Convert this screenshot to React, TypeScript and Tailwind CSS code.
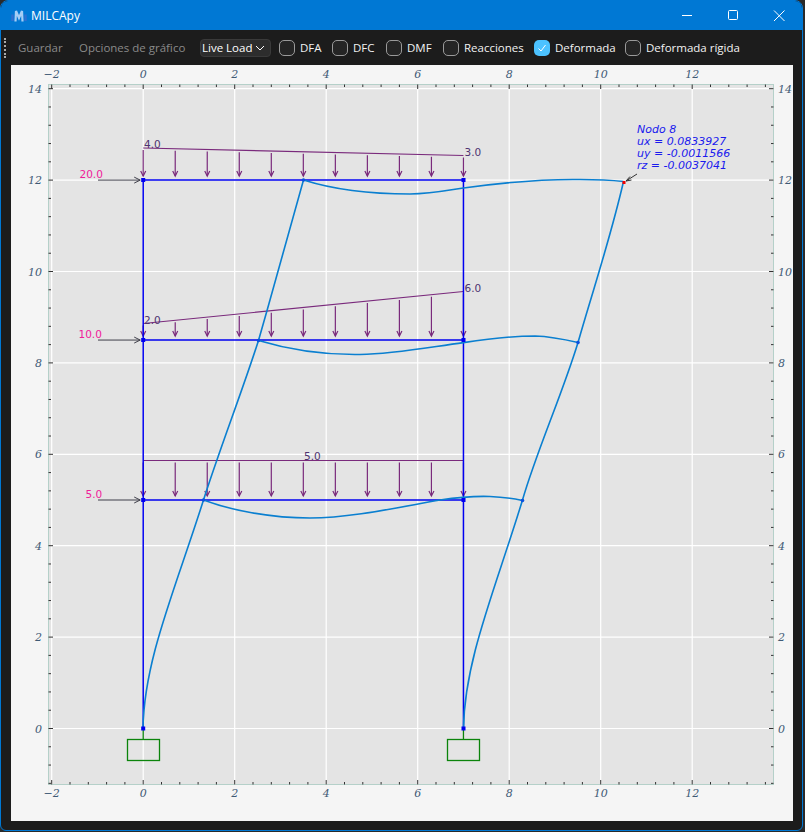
const X = (v: number) => 143.2 + v * 45.75;
const Y = (v: number) => 728.5 - v * 45.7;

const xMajor = [-2, 0, 2, 4, 6, 8, 10, 12];
const yMajor = [0, 2, 4, 6, 8, 10, 12, 14];
const xMinor = [-1.6, -1.2, -0.8, -0.4, 0.4, 0.8, 1.2, 1.6, 2.4, 2.8, 3.2, 3.6, 4.4, 4.8, 5.2, 5.6, 6.4, 6.8, 7.2, 7.6, 8.4, 8.8, 9.2, 9.6, 10.4, 10.8, 11.2, 11.6, 12.4, 12.8, 13.2, 13.6];
const yMinor = [-1.2, -0.8, -0.4, 0.4, 0.8, 1.2, 1.6, 2.4, 2.8, 3.2, 3.6, 4.4, 4.8, 5.2, 5.6, 6.4, 6.8, 7.2, 7.6, 8.4, 8.8, 9.2, 9.6, 10.4, 10.8, 11.2, 11.6, 12.4, 12.8, 13.2, 13.6];

const label = (v: number) => (v < 0 ? `\u2212${-v}` : `${v}`);

// plot box, in picture coordinates
const box = { l: 48.5, t: 84.5, r: 773.5, b: 784.5 };

const arrowXs = [0, 0.7, 1.4, 2.1, 2.8, 3.5, 4.2, 4.9, 5.6, 6.3, 7];

function Loads({ y, top }: { y: number; top: (x: number) => number }) {
  return (
    <g stroke="#7a2a7c" strokeWidth="1.2" fill="none">
      {arrowXs.map((v) => (
        <g key={v}>
          <line x1={X(v)} y1={top(v) + 2} x2={X(v)} y2={Y(y) - 4} />
          <path d={`M${X(v) - 2.5} ${Y(y) - 9}L${X(v)} ${Y(y) - 4}L${X(v) + 2.5} ${Y(y) - 9}`} />
        </g>
      ))}
    </g>
  );
}

function Plot() {
  const storeys = [5, 8.5, 12];
  const fontAxis = { fontFamily: '"DejaVu Serif", serif', fontStyle: 'italic', fontSize: 11, fill: '#3f5a75' };
  const fontSans = { fontFamily: '"DejaVu Sans", sans-serif', fontSize: 10.5 };
  return (
    <svg width="782" height="756" viewBox="11 65 782 756" className="block">
      <rect x={box.l} y={box.t} width={box.r - box.l} height={box.b - box.t} fill="#e4e4e4" stroke="#b5d0c9" />
      {/* grid */}
      <g stroke="#ffffff" strokeWidth="1.2">
        {xMajor.map((v) => (
          <line key={v} x1={X(v)} y1={box.t + 4} x2={X(v)} y2={box.b} />
        ))}
        {yMajor.map((v) => (
          <line key={v} x1={box.l + 4} y1={Y(v)} x2={box.r} y2={Y(v)} />
        ))}
      </g>
      {/* ticks */}
      <g stroke="#333" strokeWidth="1">
        {xMajor.map((v) => (
          <g key={v}>
            <line x1={X(v)} y1={box.t} x2={X(v)} y2={box.t + 4.5} />
            <line x1={X(v)} y1={box.b} x2={X(v)} y2={box.b - 4.5} />
          </g>
        ))}
        {xMinor.map((v) => (
          <g key={v}>
            <line x1={X(v)} y1={box.t} x2={X(v)} y2={box.t + 2.5} />
            <line x1={X(v)} y1={box.b} x2={X(v)} y2={box.b - 2.5} />
          </g>
        ))}
        {yMajor.map((v) => (
          <g key={v}>
            <line x1={box.l} y1={Y(v)} x2={box.l + 4.5} y2={Y(v)} />
            <line x1={box.r} y1={Y(v)} x2={box.r - 4.5} y2={Y(v)} />
          </g>
        ))}
        {yMinor.map((v) => (
          <g key={v}>
            <line x1={box.l} y1={Y(v)} x2={box.l + 2.5} y2={Y(v)} />
            <line x1={box.r} y1={Y(v)} x2={box.r - 2.5} y2={Y(v)} />
          </g>
        ))}
      </g>
      {/* tick labels */}
      {xMajor.map((v) => (
        <g key={v}>
          <text x={X(v)} y={78} textAnchor="middle" {...fontAxis}>{label(v)}</text>
          <text x={X(v)} y={797} textAnchor="middle" {...fontAxis}>{label(v)}</text>
        </g>
      ))}
      {yMajor.map((v) => (
        <g key={v}>
          <text x={42} y={Y(v) + 4} textAnchor="end" {...fontAxis}>{v}</text>
          <text x={778} y={Y(v) + 4} {...fontAxis}>{v}</text>
        </g>
      ))}
      {/* supports */}
      <g stroke="#0b840b" strokeWidth="1.3" fill="none">
        <line x1={X(0)} y1={Y(0)} x2={X(0)} y2={739.5} />
        <rect x={127.5} y={739.5} width={32} height={21} />
        <line x1={X(7)} y1={Y(0)} x2={X(7)} y2={739.5} />
        <rect x={447.5} y={739.5} width={32} height={21} />
      </g>
      {/* distributed loads */}
      <g stroke="#7a2a7c" strokeWidth="1.2" fill="none">
        <line x1={X(0)} y1={148} x2={X(7)} y2={155.5} />
        <line x1={X(0)} y1={323.5} x2={X(7)} y2={291.5} />
        <line x1={X(0)} y1={460.5} x2={X(7)} y2={460.5} />
      </g>
      <Loads y={12} top={(v) => 148 + (v / 7) * 7.5} />
      <Loads y={8.5} top={(v) => 323.5 - (v / 7) * 32} />
      <Loads y={5} top={() => 460.5} />
      <g {...fontSans} fill="#4f3370">
        <text x={144} y={148}>4.0</text>
        <text x={464.5} y={156}>3.0</text>
        <text x={144} y={324}>2.0</text>
        <text x={464.5} y={292}>6.0</text>
        <text x={304} y={460}>5.0</text>
      </g>
      {/* point loads */}
      {[
        { s: 12, t: '20.0', x: 79.5, y: 178, a: 98 },
        { s: 8.5, t: '10.0', x: 78.5, y: 338, a: 98 },
        { s: 5, t: '5.0', x: 85.5, y: 498, a: 98 },
      ].map((p) => (
        <g key={p.t}>
          <line x1={p.a} y1={Y(p.s)} x2={X(0) - 3} y2={Y(p.s)} stroke="#3f3f4a" strokeWidth="1" />
          <path d={`M${X(0) - 9} ${Y(p.s) - 3}L${X(0) - 3} ${Y(p.s)}L${X(0) - 9} ${Y(p.s) + 3}`} stroke="#3f3f4a" fill="none" />
          <text x={p.x} y={p.y} {...fontSans} fill="#f0209a">{p.t}</text>
        </g>
      ))}
      {/* frame */}
      <g stroke="#0000f0" strokeWidth="1.5" fill="none">
        <line x1={X(0)} y1={Y(0)} x2={X(0)} y2={Y(12)} />
        <line x1={X(7)} y1={Y(0)} x2={X(7)} y2={Y(12)} />
        {storeys.map((s) => (
          <line key={s} x1={X(0)} y1={Y(s)} x2={X(7)} y2={Y(s)} />
        ))}
      </g>
      {/* deformed shape */}
      <g stroke="#0a7fd0" strokeWidth="1.6" fill="none">
        <path d="M143 728.5C144 660 175 590 203.5 500C220 448 242 392 258.5 340.5C274 286 290 230 303.5 180" />
        <path d="M463.5 728.5C464.5 660 495 590 522.5 500C537 450 562 395 578 342.5C593 290 610 240 623.5 181.5" />
        <path d="M303.5 180C335 190 375 194 410 194C430 194 450 190 463.5 188C500 183 545 179 580 179.5C595 179.5 610 180 623.5 181.5" />
        <path d="M258.5 340.5C290 350 325 355 360 354.5C395 354 430 347 463.5 342.6C490 338.5 515 336 535 336C550 336.5 565 339.5 578 342.5" />
        <path d="M203.5 500C230 510 270 518 310 518C350 518 395 508 440 500C460 497 475 496 490 496.5C503 497 513 498.5 522.5 500.5" />
      </g>
      {/* nodes */}
      <g fill="#0000f0">
        {[[143.2, 728.5], [463.5, 728.5], [143.2, 500], [463.5, 500], [143.2, 340], [463.5, 340], [143.2, 180], [463.5, 180]].map(([x, y]) => (
          <rect key={`${x}-${y}`} x={x - 2} y={y - 2} width="4" height="4" />
        ))}
      </g>
      <g fill="#0a50e0">
        {[[203.5, 500], [258.5, 340.5], [303.5, 180], [522.5, 500.5], [578, 342.5]].map(([x, y]) => (
          <circle key={`${x}-${y}`} cx={x} cy={y} r="1.8" />
        ))}
      </g>
      <rect x={622.5} y={181} width="3" height="3" fill="#f00000" />
      {/* annotation */}
      <path d="M637 174L626 181M630 176.5L626 181L631.5 180" stroke="#333" fill="none" />
      <g fontFamily='"DejaVu Sans", sans-serif' fontStyle="italic" fontSize="11" fill="#1a1aee">
        <text x={637} y={132.5}>Nodo 8</text>
        <text x={637} y={144.5}>ux = 0.0833927</text>
        <text x={637} y={156.5}>uy = -0.0011566</text>
        <text x={637} y={168.5}>rz = -0.0037041</text>
      </g>
    </svg>
  );
}

function Check({ text, checked, className }: { text: string; checked?: boolean; className?: string }) {
  return (
    <div className={`flex items-center gap-[5px] ${className ?? ''}`}>
      {checked ? (
        <span className="flex size-4 shrink-0 items-center justify-center rounded-[5px] bg-[#4cc2ff]">
          <svg width="10" height="10" viewBox="0 0 10 10" fill="none" stroke="#fff" strokeWidth="1">
            <path d="M1.5 5.5L4 8L8.5 2" />
          </svg>
        </span>
      ) : (
        <span className="size-4 shrink-0 rounded-[5px] border border-[#9a9a9a] bg-[#252525]" />
      )}
      <span>{text}</span>
    </div>
  );
}

export default function App() {
  return (
    <div className="h-[832px] w-[805px] overflow-hidden bg-[#2a2a2a] font-['Open_Sans',sans-serif] text-[11.5px]">
      <div className="mr-[2px] flex h-[831px] flex-col overflow-hidden rounded-t-lg rounded-b-md border border-[#0078d4] bg-[#1c1c1c]">
        <div className="flex h-[29px] shrink-0 items-center bg-[#0078d4] text-white">
          <svg width="20" height="20" viewBox="0 0 20 20" className="ml-[8px]" fill="none">
            <path d="M3.5 8.5V15M16.5 8.5V15" stroke="#2f6fd0" strokeWidth="2.4" />
            <path d="M6.5 15.5L7 5L10 12L13 5L13.5 15.5" stroke="#a6cdf5" strokeWidth="2.2" />
          </svg>
          <span className="ml-[2px] text-xs">MILCApy</span>
          <div className="ml-auto flex items-center">
            <svg width="46" height="29" viewBox="0 0 46 29" stroke="#fff" fill="none"><path d="M18 14.5H28" /></svg>
            <svg width="46" height="29" viewBox="0 0 46 29" stroke="#fff" fill="none"><rect x="18.5" y="9.5" width="9" height="9" rx="1" /></svg>
            <svg width="46" height="29" viewBox="0 0 46 29" stroke="#fff" fill="none"><path d="M18 9.5L28.5 20M28.5 9.5L18 20" /></svg>
          </div>
        </div>
        <div className="flex h-[35px] shrink-0 items-center text-[#f2f2f2]">
          <div className="ml-[3px] h-[20px] w-[3px] border-l-2 border-dotted border-[#aaa]" />
          <span className="ml-[11px] w-[61px] text-[#8a8a8a]">Guardar</span>
          <span className="w-[121px] text-[#8a8a8a]">Opciones de gráfico</span>
          <div className="flex h-[18px] w-[71px] items-center gap-[3px] rounded-[4px] border border-[#3a3a3a] bg-[#2d2d2d] px-[1px] text-white">
            Live Load
            <svg width="10" height="6" viewBox="0 0 10 6" fill="none" stroke="#fff"><path d="M1 1L5 5L9 1" /></svg>
          </div>
          <div className="ml-[8px] flex items-center">
            <Check text="DFA" className="w-[53px]" />
            <Check text="DFC" className="w-[54px]" />
            <Check text="DMF" className="w-[57px]" />
            <Check text="Reacciones" className="w-[91px]" />
            <Check text="Deformada" checked className="w-[91px]" />
            <Check text="Deformada rígida" />
          </div>
        </div>
        <div className="ml-[10px] w-[782px] bg-[#f5f5f5]">
          <Plot />
        </div>
      </div>
    </div>
  );
}
